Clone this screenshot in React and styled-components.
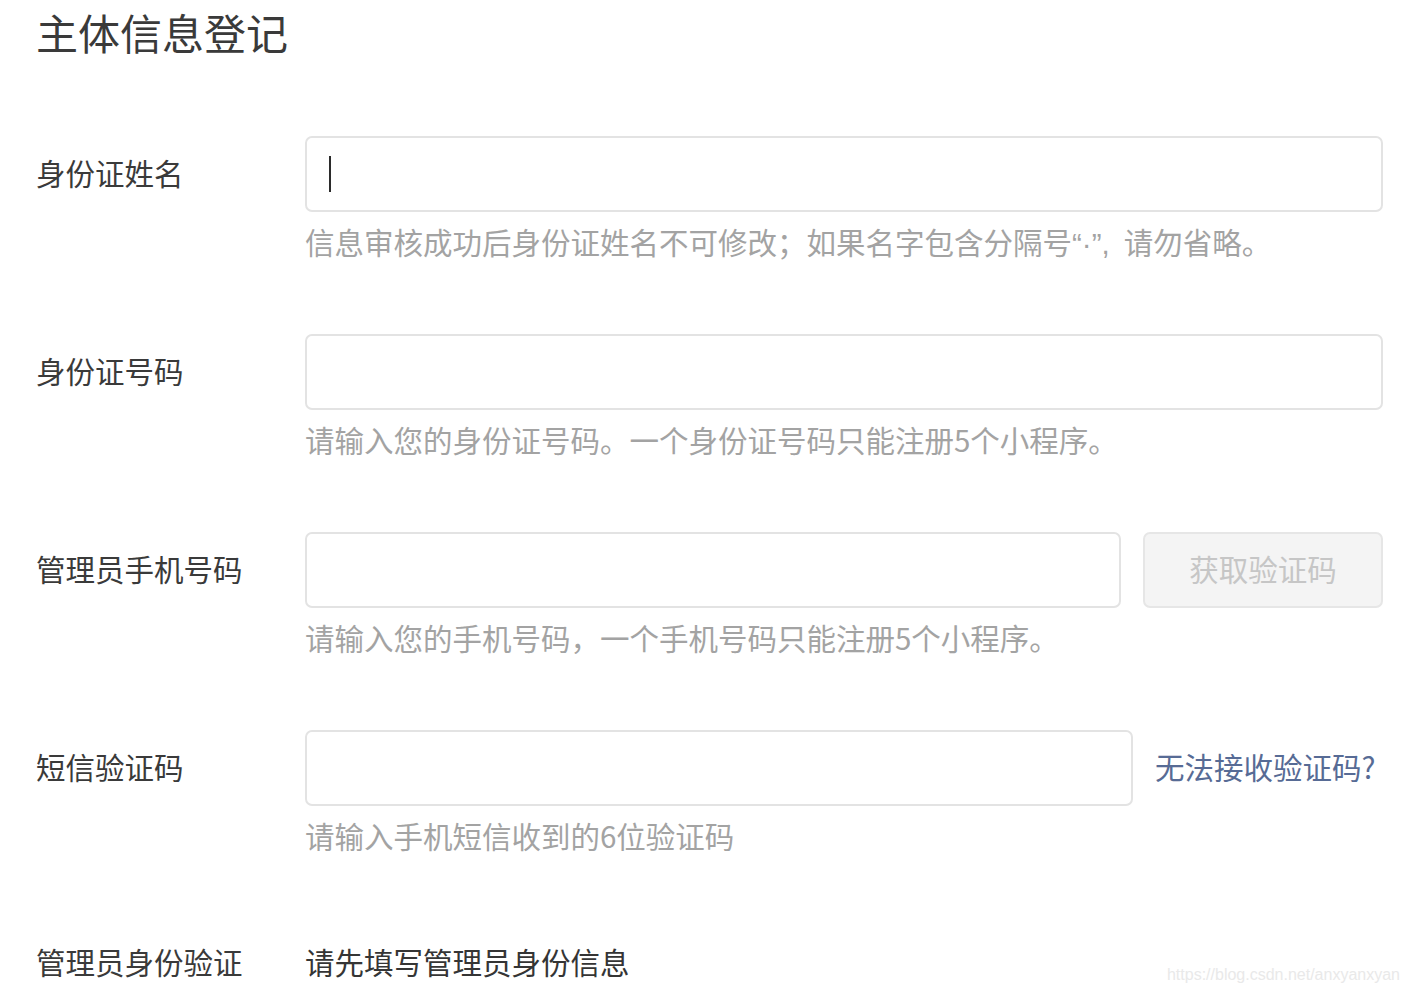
import styled, { createGlobalStyle } from "styled-components";

const GlobalStyle = createGlobalStyle`
  body {
    margin: 0;
    background: #fff;
    font-family: "Noto Sans CJK SC", "Noto Sans", sans-serif;
    color: #353535;
  }
`;

const Page = styled.div`
  position: relative;
  width: 1410px;
  height: 994px;
  box-sizing: border-box;
  padding: 0 27px 0 36px;
  overflow: hidden;
`;

const Title = styled.h1`
  margin: 3px 0 0;
  font-size: 42px;
  line-height: 58px;
  font-weight: 400;
  color: #3a3a3a;
`;

const Form = styled.div`
  margin-top: 75px;
  display: flex;
  flex-direction: column;
  gap: 73px;
`;

const Row = styled.div`
  display: grid;
  grid-template-columns: 269px 1fr;
`;

const Label = styled.div`
  height: ${(p) => p.$height || 76}px;
  box-sizing: border-box;
  padding-bottom: 5px;
  display: flex;
  align-items: center;
  font-size: 29.5px;
  color: #3a3a3a;
  white-space: nowrap;
`;

const Control = styled.div`
  display: flex;
  flex-direction: column;
`;

const Line = styled.div`
  display: flex;
  align-items: center;
  gap: 22px;
  height: 76px;
`;

const Field = styled.div`
  flex: 1;
  height: 76px;
  box-sizing: border-box;
  border: 2px solid #e3e3e3;
  border-radius: 7px;
  background: #fff;
  display: flex;
  align-items: center;
  padding: 0 22px;
`;

const Caret = styled.span`
  width: 2px;
  height: 36px;
  background: #2b2b2b;
  flex: none;
`;

const Input = styled.input`
  flex: 1;
  min-width: 0;
  border: none;
  outline: none;
  background: transparent;
  font: inherit;
  font-size: 29.5px;
  color: #353535;
`;

const CodeButton = styled.button`
  width: 240px;
  height: 76px;
  box-sizing: border-box;
  border: 2px solid #e6e6e6;
  border-radius: 7px;
  background: #f4f4f4;
  color: #c6c6c6;
  font-family: inherit;
  font-size: 29.5px;
  padding: 0 0 4px;
`;

const HelpLink = styled.a`
  width: 228px;
  padding-bottom: 4px;
  font-size: 29.5px;
  color: #576b95;
  text-decoration: none;
  white-space: nowrap;
`;

const Hint = styled.div`
  margin-top: 9px;
  height: 40px;
  font-size: 29.5px;
  line-height: 40px;
  color: #a3a3a3;
  white-space: nowrap;
`;

const Narrow = styled.span`
  font-family: "Liberation Sans", Arial, sans-serif;
  line-height: 0;
  margin-right: 14px;
`;

const Value = styled(Label)`
  color: #353535;
`;

const Watermark = styled.div`
  position: absolute;
  right: 10px;
  bottom: 10px;
  font-family: "Liberation Sans", Arial, sans-serif;
  font-size: 16px;
  color: #e9e9e9;
`;

export default function App() {
  return (
    <Page>
      <GlobalStyle />
      <Title>主体信息登记</Title>
      <Form>
        <Row>
          <Label>身份证姓名</Label>
          <Control>
            <Line>
              <Field>
                <Caret />
                <Input />
              </Field>
            </Line>
            <Hint>
              信息审核成功后身份证姓名不可修改；如果名字包含分隔号<Narrow>“·”,</Narrow>请勿省略。
            </Hint>
          </Control>
        </Row>
        <Row>
          <Label>身份证号码</Label>
          <Control>
            <Line>
              <Field>
                <Input />
              </Field>
            </Line>
            <Hint>请输入您的身份证号码。一个身份证号码只能注册5个小程序。</Hint>
          </Control>
        </Row>
        <Row>
          <Label>管理员手机号码</Label>
          <Control>
            <Line>
              <Field>
                <Input />
              </Field>
              <CodeButton disabled>获取验证码</CodeButton>
            </Line>
            <Hint>请输入您的手机号码，一个手机号码只能注册5个小程序。</Hint>
          </Control>
        </Row>
        <Row>
          <Label>短信验证码</Label>
          <Control>
            <Line>
              <Field>
                <Input />
              </Field>
              <HelpLink href="#">无法接收验证码?</HelpLink>
            </Line>
            <Hint>请输入手机短信收到的6位验证码</Hint>
          </Control>
        </Row>
        <Row>
          <Label $height={70}>管理员身份验证</Label>
          <Value $height={70}>请先填写管理员身份信息</Value>
        </Row>
      </Form>
      <Watermark>https://blog.csdn.net/anxyanxyan</Watermark>
    </Page>
  );
}
